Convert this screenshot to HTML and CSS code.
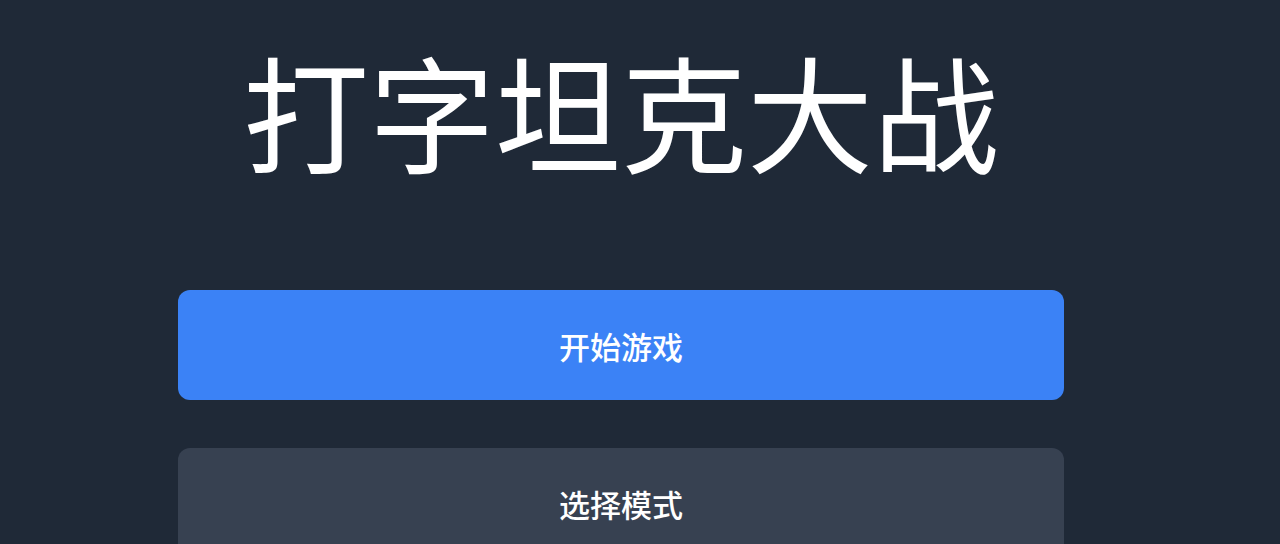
FILE: index.html
```html
<!DOCTYPE html>
<html lang="zh-CN">
<head>
<meta charset="utf-8">
<title>打字坦克大战</title>
<link rel="stylesheet" href="styles.css">
</head>
<body>
<main class="menu">
  <h1 class="title">打字坦克大战</h1>
  <div class="buttons">
    <button class="btn btn-primary">开始游戏</button>
    <button class="btn btn-secondary">选择模式</button>
  </div>
</main>
</body>
</html>
```

FILE: styles.css
```css
html, body {
  margin: 0;
  padding: 0;
  height: 100%;
  overflow: hidden;
}
body {
  background: #1f2937;
  font-family: "Noto Sans CJK SC", "Noto Sans", sans-serif;
  color: #ffffff;
}
.menu {
  width: 886px;
  margin-left: 178px;
  padding-top: 46px;
  display: flex;
  flex-direction: column;
  align-items: center;
}
.title {
  margin: 0;
  font-size: 126px;
  line-height: 126px;
  font-weight: 400;
  height: 126px;
}
.buttons {
  margin-top: 118px;
  width: 100%;
  display: flex;
  flex-direction: column;
  gap: 48px;
}
.btn {
  width: 100%;
  height: 110px;
  border: none;
  border-radius: 12px;
  color: #ffffff;
  font-family: "Noto Sans CJK SC", "Noto Sans", sans-serif;
  font-size: 31px;
  font-weight: 500;
  cursor: pointer;
}
.btn-primary {
  background: #3b82f6;
}
.btn-secondary {
  background: #374151;
}
```
